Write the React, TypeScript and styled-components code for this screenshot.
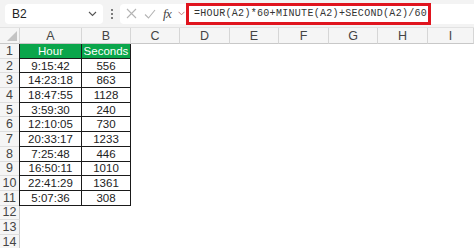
import { Fragment } from 'react';
import styled, { createGlobalStyle } from 'styled-components';

const GlobalStyle = createGlobalStyle`
  html, body {
    margin: 0;
    padding: 0;
    background: #ffffff;
    overflow: hidden;
  }
  * {
    box-sizing: border-box;
  }
`;

const Page = styled.div`
  width: 474px;
  height: 248px;
  overflow: hidden;
  background: #ffffff;
  font-family: "Liberation Sans", Arial, sans-serif;
`;

const FormulaBar = styled.div`
  height: 28px;
  display: flex;
  align-items: center;
  padding: 0 0 0 5px;
  background: #f3f3f3;
  border-bottom: 1px solid #e2e2e2;
`;

const NameBox = styled.div`
  width: 98px;
  height: 20px;
  display: flex;
  align-items: center;
  justify-content: space-between;
  padding: 0 6px 0 7px;
  background: #ffffff;
  border-radius: 4px;
  font-size: 12px;
  color: #222;
`;

const Dots = styled.div`
  width: 17px;
  display: flex;
  flex-direction: column;
  align-items: center;
  gap: 2px;

  span {
    width: 2px;
    height: 2px;
    border-radius: 1px;
    background: #555;
  }
`;

const ActionBox = styled.div`
  width: 66px;
  height: 20px;
  display: flex;
  align-items: center;
  gap: 7px;
  padding: 0 0 0 6px;
  background: #ffffff;
  border-radius: 4px 0 0 4px;
`;

const Fx = styled.span`
  font-family: "Liberation Serif", "Times New Roman", serif;
  font-style: italic;
  font-size: 13px;
  color: #444;
  letter-spacing: -0.5px;
`;

const FormulaInput = styled.div`
  width: 245px;
  height: 22px;
  display: flex;
  align-items: center;
  padding: 0 0 0 5px;
  background: #ffffff;
  border: 3px solid #e0141e;
  font-family: "Liberation Mono", "DejaVu Sans Mono", monospace;
  font-size: 10px;
  font-weight: 400;
  letter-spacing: 0.3px;
  color: #333;
  white-space: nowrap;
  overflow: hidden;
`;

const FormulaTail = styled.div`
  flex: 1;
  height: 20px;
  background: #ffffff;
`;

const Sheet = styled.div`
  display: grid;
  grid-template-columns: 20px 62px 49px 49px 50px 49px 50px 49px 50px 1fr;
  grid-template-rows: 16px repeat(14, 14.7px);
`;

const Corner = styled.div`
  display: flex;
  align-items: flex-end;
  justify-content: flex-end;
  padding: 0 2px 2px 0;
  background: #f5f5f5;
  border-right: 1px solid #d6d6d6;
  border-bottom: 1px solid #c8c8c8;
`;

const ColHeader = styled.div`
  display: flex;
  align-items: center;
  justify-content: center;
  background: #f5f5f5;
  border-right: 1px solid #d6d6d6;
  border-bottom: 1px solid #c8c8c8;
  font-size: 12.5px;
  color: #444;
`;

const RowHeader = styled.div`
  display: flex;
  align-items: center;
  justify-content: center;
  background: #f5f5f5;
  border-right: 1px solid #c8c8c8;
  border-bottom: 1px solid #dedede;
  font-size: 12.5px;
  color: #444;
`;

const Cell = styled.div<{ $table?: boolean; $head?: boolean; $first?: boolean }>`
  display: flex;
  align-items: center;
  justify-content: center;
  font-family: "Liberation Sans", Arial, sans-serif;
  font-size: 11.5px;
  color: ${(p) => (p.$head ? '#ffffff' : '#222')};
  background: ${(p) => (p.$head ? '#0aa64b' : '#ffffff')};
  border-right: ${(p) => (p.$table ? '1px solid #1a1a1a' : 'none')};
  border-bottom: ${(p) => (p.$table ? '1px solid #1a1a1a' : 'none')};
  border-left: ${(p) => (p.$table && p.$first ? '1px solid #1a1a1a' : 'none')};
  margin-left: ${(p) => (p.$table && p.$first ? '-1px' : '0')};
`;

const columns = ['A', 'B', 'C', 'D', 'E', 'F', 'G', 'H', 'I'];

const data: [string, string][] = [
  ['9:15:42', '556'],
  ['14:23:18', '863'],
  ['18:47:55', '1128'],
  ['3:59:30', '240'],
  ['12:10:05', '730'],
  ['20:33:17', '1233'],
  ['7:25:48', '446'],
  ['16:50:11', '1010'],
  ['22:41:29', '1361'],
  ['5:07:36', '308'],
];

function Chevron() {
  return (
    <svg width="9" height="6" viewBox="0 0 9 6">
      <path d="M1 1 L4.5 4.5 L8 1" fill="none" stroke="#555" strokeWidth="1.1" />
    </svg>
  );
}

export default function App() {
  const rows: { label: string; a: string; b: string; head?: boolean; table: boolean }[] = [
    { label: '1', a: 'Hour', b: 'Seconds', head: true, table: true },
    ...data.map(([a, b], i) => ({ label: String(i + 2), a, b, table: true })),
    ...[12, 13, 14].map((n) => ({ label: String(n), a: '', b: '', table: false })),
  ];

  return (
    <Page>
      <GlobalStyle />
      <FormulaBar>
        <NameBox>
          <span>B2</span>
          <Chevron />
        </NameBox>
        <Dots>
          <span />
          <span />
          <span />
        </Dots>
        <ActionBox>
          <svg width="11" height="11" viewBox="0 0 11 11">
            <path d="M1 1 L10 10 M10 1 L1 10" stroke="#b4b4b4" strokeWidth="1.1" />
          </svg>
          <svg width="12" height="10" viewBox="0 0 12 10">
            <path d="M1 5.5 L4.5 9 L11 1" fill="none" stroke="#b4b4b4" strokeWidth="1.1" />
          </svg>
          <Fx>fx</Fx>
          <svg width="7" height="5" viewBox="0 0 7 5">
            <path d="M0.5 0.8 L3.5 3.8 L6.5 0.8" fill="none" stroke="#c08080" strokeWidth="1" />
          </svg>
        </ActionBox>
        <FormulaInput>=HOUR(A2)*60+MINUTE(A2)+SECOND(A2)/60</FormulaInput>
        <FormulaTail />
      </FormulaBar>
      <Sheet>
        <Corner>
          <svg width="10" height="10" viewBox="0 0 10 10">
            <path d="M10 0 L10 10 L0 10 Z" fill="#c4c4c4" />
          </svg>
        </Corner>
        {columns.map((c) => (
          <ColHeader key={c}>{c}</ColHeader>
        ))}
        {rows.map((r) => (
          <Fragment key={r.label}>
            <RowHeader>{r.label}</RowHeader>
            <Cell $table={r.table} $head={r.head} $first>
              {r.a}
            </Cell>
            <Cell $table={r.table} $head={r.head}>
              {r.b}
            </Cell>
            {columns.slice(2).map((c) => (
              <Cell key={c} />
            ))}
          </Fragment>
        ))}
      </Sheet>
    </Page>
  );
}
